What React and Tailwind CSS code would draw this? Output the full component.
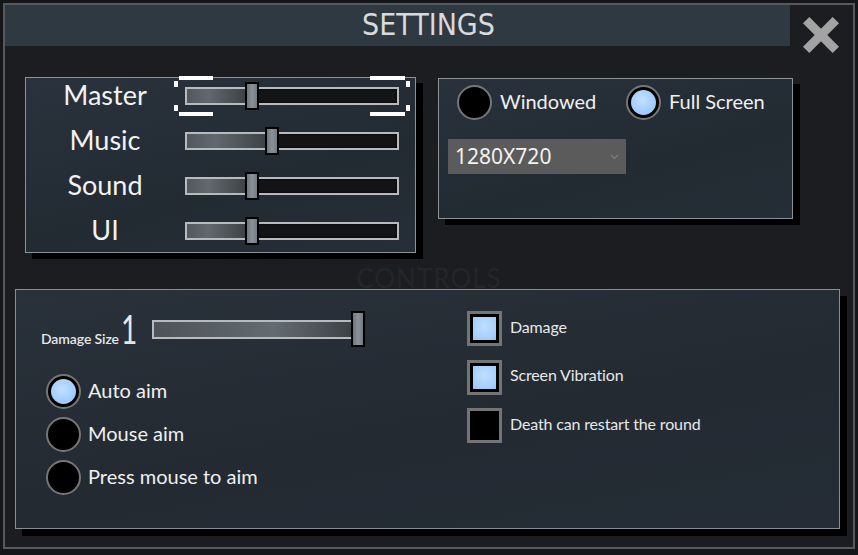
import React from "react";

const label = { fontFamily: "Lato, 'Open Sans', sans-serif" };

function Slider({ pos, width = 214, height = 18, thumbH = 28, full = false, selected = false }) {
  return (
    <div className="relative shrink-0" style={{ width, height }}>
      <div className="absolute inset-0 border-2 border-[#b7bbbe] bg-[#131416] shadow-[inset_0_0_3px_#000]">
        <div
          className={
            full
              ? "h-full bg-[linear-gradient(90deg,#4d5358,#5c6368_40%,#646b71_60%,#3c4146)]"
              : "h-full bg-[linear-gradient(90deg,#52585d,#62686d_35%,#3c4146)]"
          }
          style={{ width: pos }}
        />
      </div>
      <div
        className="absolute top-1/2 -translate-y-1/2 w-[14px] border-2 border-black bg-[linear-gradient(90deg,#6f767d,#8a9198_50%,#737a81)]"
        style={{ left: pos, height: thumbH }}
      />
      {selected && (
        <>
          <div className="absolute left-[-6px] top-[-11px] w-[34px] h-[4px] bg-white" />
          <div className="absolute left-[-11px] top-[-6px] w-[4px] h-[6px] bg-white" />
          <div className="absolute left-[-11px] top-[18px] w-[4px] h-[6px] bg-white" />
          <div className="absolute left-[-6px] top-[25px] w-[34px] h-[4px] bg-white" />
          <div className="absolute left-[185px] top-[-11px] w-[35px] h-[4px] bg-white" />
          <div className="absolute left-[221px] top-[-6px] w-[4px] h-[6px] bg-white" />
          <div className="absolute left-[221px] top-[18px] w-[4px] h-[6px] bg-white" />
          <div className="absolute left-[185px] top-[25px] w-[35px] h-[4px] bg-white" />
        </>
      )}
    </div>
  );
}

function Radio({ checked }) {
  return (
    <div className="w-[35px] h-[35px] shrink-0 rounded-full border-2 border-[#767676] bg-black flex items-center justify-center">
      {checked && (
        <div className="w-[25px] h-[25px] rounded-full bg-[radial-gradient(circle_at_45%_40%,#c2e0ff,#9ccaff_70%,#8fbff5)]" />
      )}
    </div>
  );
}

function Check({ checked }) {
  return (
    <div className="w-[35px] h-[35px] shrink-0 border-[3px] border-[#747474] bg-black flex items-center justify-center">
      {checked && (
        <div className="w-[23px] h-[23px] bg-[radial-gradient(circle_at_50%_40%,#bfe0ff,#a3cdfb_75%,#97c3f2)]" />
      )}
    </div>
  );
}

const volumes = [
  { name: "Master", pos: 60, selected: true },
  { name: "Music", pos: 80 },
  { name: "Sound", pos: 60 },
  { name: "UI", pos: 60 },
];

export default function App() {
  return (
    <div className="w-[858px] h-[555px] bg-[#151618] overflow-hidden">
      <div className="ml-[3px] mt-[3px] w-[852px] h-[546px] border-2 border-[#55595d] bg-[#1b1d20] flex flex-col">
        {/* header */}
        <div className="flex items-start">
          <div className="w-[785px] h-[41px] bg-[#2e3942] flex items-center justify-center pl-[62px]">
            <span
              className="text-[30px] leading-none text-[#d8dadb] mt-[-2px]"
              style={{ fontFamily: "'DejaVu Sans Condensed', 'Roboto Condensed', Roboto, sans-serif" }}
            >
              SETTINGS
            </span>
          </div>
          <svg className="ml-[13px] mt-[12px]" width="36" height="36" viewBox="0 0 36 36">
            <g fill="#a3a3a3">
              <rect x="-3" y="13.5" width="42" height="9" transform="rotate(45 18 18)" />
              <rect x="-3" y="13.5" width="42" height="9" transform="rotate(-45 18 18)" />
            </g>
          </svg>
        </div>

        {/* audio + display */}
        <div className="flex items-start mt-[24px]">
          <div className="ml-[20px] w-[391px] h-[176px] border border-[#8b9298] bg-[linear-gradient(165deg,#2a333d,#222a32_60%,#262e37)] shadow-[7px_6px_0_#000] flex flex-col gap-[9px]">
            {volumes.map((v) => (
              <div key={v.name} className="h-[36px] flex items-center">
                <div className="w-[158px] mb-[4px] text-center text-[27px] leading-none text-[#f2f2f2]" style={label}>
                  {v.name}
                </div>
                <div className="ml-[1px]">
                  <Slider pos={v.pos} selected={v.selected} />
                </div>
              </div>
            ))}
          </div>

          <div className="ml-[22px] mt-[1px] w-[355px] h-[141px] border border-[#8b9298] bg-[linear-gradient(165deg,#29323c,#222a32_60%,#252d36)] shadow-[7px_6px_0_#000] flex flex-col">
            <div className="flex items-center pl-[18px] pt-[6px]">
              <div className="w-[169px] flex items-center gap-[8px]">
                <Radio />
                <span className="mb-[3px] text-[20px] leading-none text-[#f0f0f0]" style={label}>Windowed</span>
              </div>
              <div className="flex items-center gap-[8px]">
                <Radio checked />
                <span className="mb-[3px] text-[20px] leading-none text-[#f0f0f0]" style={label}>Full Screen</span>
              </div>
            </div>
            <div className="ml-[9px] mt-[19px] w-[178px] h-[35px] bg-[#5b5b5b] flex items-center justify-between pl-[7px] pr-[7px]">
              <span className="text-[21px] leading-none text-[#f2f2f2]" style={{ fontFamily: "'Noto Sans', 'Open Sans', sans-serif" }}>
                1280X720
              </span>
              <svg width="9" height="6" viewBox="0 0 9 6">
                <path d="M1 1 L4.5 4.5 L8 1" fill="none" stroke="#7c7c7c" strokeWidth="1.3" />
              </svg>
            </div>
          </div>
        </div>

        {/* ghost heading */}
        <div className="h-[30px] mt-[6px] flex items-end justify-center">
          <span className="text-[26px] leading-none tracking-[1px] text-[#232629] mb-[-2px]" style={label}>
            CONTROLS
          </span>
        </div>

        {/* controls */}
        <div className="ml-[10px] w-[825px] h-[240px] border border-[#878e94] bg-[linear-gradient(170deg,#29313a,#232a32_55%,#242c35)] shadow-[7px_7px_0_#000] flex">
          <div className="w-[451px] pl-[25px] pt-[21px] flex flex-col">
            <div className="h-[36px] flex items-center">
              <div className="w-[111px] flex items-baseline mt-[-1px]" style={label}>
                <span className="text-[14px] leading-none font-semibold tracking-[-0.1px] text-[#e6e6e6]">Damage Size</span>
                <span className="ml-[2px] text-[40px] leading-none font-normal text-[#e6e6e6] inline-block scale-x-[0.7] origin-left">1</span>
              </div>
              <Slider pos={199} width={213} height={19} thumbH={36} full />
            </div>
            <div className="mt-[27px] ml-[5px] flex flex-col gap-[8px]">
              {[
                ["Auto aim", true],
                ["Mouse aim", false],
                ["Press mouse to aim", false],
              ].map(([t, c]) => (
                <div key={t} className="flex items-center gap-[7px]">
                  <Radio checked={c} />
                  <span className="mb-[3px] text-[20px] leading-none text-[#f0f0f0]" style={label}>{t}</span>
                </div>
              ))}
            </div>
          </div>
          <div className="pt-[21px] flex flex-col gap-[13.5px]">
            {[
              ["Damage", true],
              ["Screen Vibration", true],
              ["Death can restart the round", false],
            ].map(([t, c]) => (
              <div key={t} className="flex items-center gap-[8px]">
                <Check checked={c} />
                <span className="mb-[4px] text-[16px] leading-none tracking-[-0.15px] text-[#e8e8e8]" style={label}>{t}</span>
              </div>
            ))}
          </div>
        </div>
      </div>
    </div>
  );
}
